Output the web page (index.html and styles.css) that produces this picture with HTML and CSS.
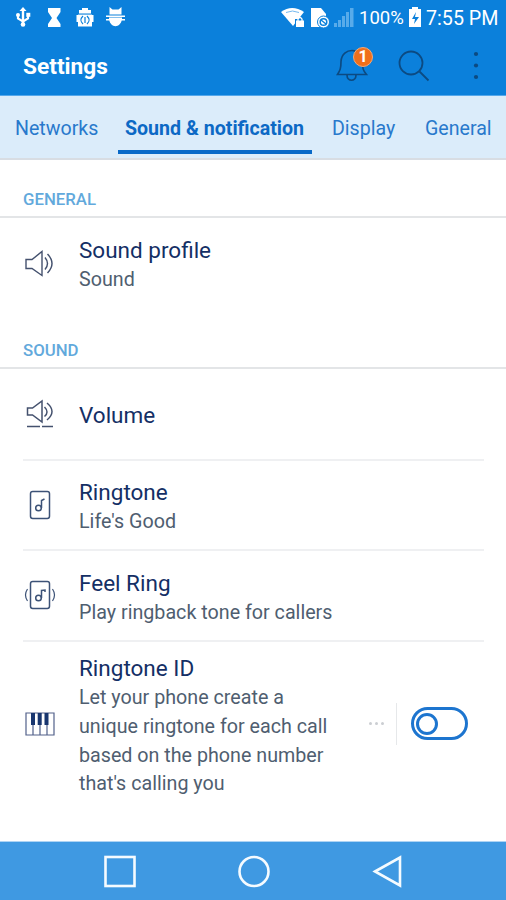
FILE: index.html
```html
<!DOCTYPE html>
<html lang="en">
<head>
<meta charset="utf-8">
<title>Settings</title>
<link rel="stylesheet" href="styles.css">
</head>
<body>
<div class="status">
  <svg class="s-left" width="112" height="24" viewBox="0 0 112 24" fill="#fff">
    <path d="M8 1l3.500 4H4.500zM6.800 4h2.400v14H6.800z"/><circle cx="8" cy="18.500" r="2.300"/><circle cx="3" cy="9" r="2"/><path d="M11.300 6.800h4v4h-4z"/>
    <path d="M3 9v3.500l5 3 5-3V9" fill="none" stroke="#fff" stroke-width="2.200"/>
    <path d="M33 2h12.500v4l-4 6 4 6v3H33v-3l4-6-4-6z"/>
    <path d="M64 4h3V2h6v2h3v4H64zM63 8.500h14v12H63z"/>
    <rect x="61.500" y="9" width="3" height="7"/><rect x="75.500" y="9" width="3" height="7"/>
    <rect x="62" y="7.500" width="16" height=".7" fill="#0b80db"/>
    <path d="M68 10c-3 3-3 5 0 8M72 10c3 3 3 5 0 8M70 11v6" fill="none" stroke="#0b80db" stroke-width="1.200"/>
    <path d="M94.500 1l3 2.500h6l3-2.500v7.500h-12zM91 9.500h19V11H91zM94 11.500h13V13h3v1.500h-3.300c-.7 3-3.200 5.700-6.200 5.700s-5.500-2.700-6.200-5.700H91V13h3z"/>
  </svg>
  <svg class="s-right" width="76" height="24" viewBox="0 0 76 24">
    <path d="M0 6q11-8 23 0L12 20z" fill="#fff"/><path d="M5 6.500q6.500-3 13 0" fill="none" stroke="#75b9ef" stroke-width="1"/>
    <path d="M14 13h10v9H14z" fill="#0b80db"/><path d="M15 14.500h8v6.500h-8z" fill="#fff"/><path d="M17 15v-2q2-3 4 0v2" fill="none" stroke="#fff" stroke-width="1.300"/>
    <path d="M30 2h10l5 6v13H30z" fill="#fff"/><circle cx="42.500" cy="16" r="6" fill="#fff" stroke="#0b80db" stroke-width="1"/><circle cx="42.500" cy="16" r="3.300" fill="none" stroke="#0b80db" stroke-width="1.500"/><path d="M40 14l5 4" stroke="#0b80db" stroke-width="1.500"/>
    <path d="M53 17h3v4h-3zM57 14h3v7h-3zM61 10h3v11h-3zM65 6h3v15h-3zM69 2h3.500v19H69z" fill="#58abea"/>
  </svg>
  <span class="pct">100%</span>
  <svg class="bat" width="14" height="24" viewBox="0 0 14 24"><path d="M4 1h6v2h3v18H1V3h3z" fill="#fff"/><path d="M8 6l-4 7h3l-1 5 5-7H7z" fill="#0b80db"/></svg>
  <span class="time">7:55 PM</span>
</div>
<header class="header">
  <h1><span>Settings</span></h1>
  <div class="bell">
    <svg width="32" height="36" viewBox="0 0 32 36" fill="none" stroke="#0c4a82" stroke-width="1.700"><path d="M1.500 26.500h29c-3.500-4-4-6-4-13C26 5 21 2.500 16 2.500S5.500 6 5 13.500c0 7-1 9-3.500 13zM11 27c0 7 9 7 9 0"/></svg>
    <b class="badge">1</b>
  </div>
  <svg class="search" width="32" height="32" viewBox="0 0 32 32" fill="none" stroke="#0c4a82" stroke-width="1.800"><circle cx="13" cy="13" r="11.500"/><path d="M21.500 21.500l9 9"/></svg>
  <svg class="more" width="6" height="30" viewBox="0 0 6 30" fill="#0c4a82"><circle cx="3" cy="3" r="2.100"/><circle cx="3" cy="14.500" r="2.100"/><circle cx="3" cy="26" r="2.100"/></svg>
</header>
<nav class="tabs">
  <a class="tab t1">Networks</a><a class="tab t2">Sound &amp; notification</a><a class="tab t3">Display</a><a class="tab t4">General</a>
</nav>
<main>
  <h2 class="section first"><span>GENERAL</span></h2>
  <div class="row profile">
    <svg class="ico" width="34" height="34" viewBox="0 0 34 34" fill="none" stroke="#44516e" stroke-width="1.400"><path d="M4 12.500h6l10-8v24l-10-7H4zM23 10.500q5 6 0 12M25.500 7q9 9.500 0 19"/></svg>
    <div class="text"><div class="title">Sound profile</div><div class="sub">Sound</div></div>
  </div>
  <h2 class="section second"><span>SOUND</span></h2>
  <div class="row volume">
    <svg class="ico" width="34" height="34" viewBox="0 0 34 34" fill="none" stroke="#44516e" stroke-width="1.500"><path d="M5.500 11h5L20 4v21l-9.500-7h-5zM22.500 10q5 5 0 9.500M25 6q10 8.500 0 17M5 29.500h13M20 29.500h11"/></svg>
    <div class="text"><div class="title">Volume</div></div>
  </div>
  <div class="row ring">
    <svg class="ico" width="34" height="34" viewBox="0 0 34 34" fill="none" stroke="#3c5277" stroke-width="1.500"><rect x="8.500" y="3.500" width="19" height="27" rx="2.200"/><circle cx="16.500" cy="20" r="2.800"/><path d="M19.500 20v-7.500l3-1.500"/></svg>
    <div class="text"><div class="title">Ringtone</div><div class="sub">Life's Good</div></div>
  </div>
  <div class="row feel">
    <svg class="ico" width="34" height="34" viewBox="0 0 34 34" fill="none" stroke="#3c5277" stroke-width="1.500"><rect x="8.500" y="3.500" width="19" height="27" rx="2.200"/><circle cx="16.500" cy="20" r="2.800"/><path d="M19.500 20v-7.500l3.500-.5v2"/><path d="M5.500 11q-4 6 0 12M30.500 11q4 6 0 12" stroke-width="1.200"/></svg>
    <div class="text"><div class="title">Feel Ring</div><div class="sub">Play ringback tone for callers</div></div>
  </div>
  <div class="row id">
    <svg class="ico" width="34" height="34" viewBox="0 0 34 34"><path d="M4 6h28v22H4zM11 16v12M18 16v12M25 16v12" fill="none" stroke="#52618a" stroke-width="1.200"/><path d="M9 6h4v12H9zM15.700 6h4v12h-4zM22.500 6h4v12h-4z" fill="#19366f"/></svg>
    <div class="text"><div class="title">Ringtone ID</div><div class="sub">Let your phone create a<br>unique ringtone for each call<br>based on the phone number<br>that's calling you</div></div>
    <div class="control">
      <div class="dots"><i></i><i></i><i></i></div><i class="bar"></i><div class="toggle"><i></i></div>
    </div>
  </div>
</main>
<footer class="nav">
  <svg width="32" height="34" viewBox="0 0 32 34"><rect x="1.500" y="2" width="29" height="29"/></svg>
  <svg width="32" height="34" viewBox="0 0 32 34"><circle cx="16" cy="16.500" r="14.500"/></svg>
  <svg width="32" height="34" viewBox="0 0 32 34"><path d="M3 16.500L28 2.500v28z"/></svg>
</footer>
</body>
</html>
```
FILE: styles.css
```css
* { box-sizing: border-box; }
body {
  margin: 0; width: 506px; height: 900px; overflow: hidden;
  display: flex; flex-direction: column;
  background: #fff; font-family: Roboto, "Liberation Sans", sans-serif;
}
svg { display: block; flex: none; }
h1, h2 { margin: 0; }
.status {
  height: 36px; flex: none; display: flex; align-items: center;
  padding-left: 15px; background: #0b80db; color: #fff; white-space: nowrap;
}
.s-left { margin-top: -1px; }
.s-right { margin: 0 0 0 154px; }
.pct { margin-left: 2px; width: 45px; font-size: 18.500px; }
.bat { margin: 0 4px 0 4px; }
.time { font-size: 19.700px; padding-top: 1px; }
.header {
  height: 60px; flex: none; display: flex; align-items: center;
  padding: 0 27px 0 23px; background: #0b80db; border-bottom: 1px solid #55a8eb;
}
h1 { flex: 1; padding-top: 2px; font-size: 22.700px; font-weight: 700; color: #fff; }
.bell { position: relative; margin-right: 30px; }
.badge {
  position: absolute; left: 17px; top: -1px; width: 20px; height: 20px;
  border-radius: 50%; border: 1px solid #f3a978; background: #f06f1b;
  color: #fff; font-size: 16px; line-height: 18px; text-align: center;
}
.search { margin-right: 43px; }
.tabs {
  height: 64px; flex: none; display: flex; padding-left: 15px;
  background: #dbecfa; border-bottom: 2px solid #d8dde3;
}
.tab {
  height: 58px; padding-top: 21px; white-space: nowrap;
  font-size: 19.600px; line-height: 24px; color: #2879cc;
}
.t1 { width: 103px; }
.t2 { width: 194px; padding-left: 7px; font-weight: 700; color: #0c69c5; border-bottom: 4px solid #0869c8; }
.t3 { margin-left: 20px; width: 93px; }
.section {
  height: 58px; padding: 29px 0 0 23px; border-bottom: 2px solid #e3e5e7;
  font-size: 16.800px; line-height: 20px; font-weight: 500; color: #62a9dc;
}
.section.second { height: 53px; padding-top: 24px; }
.row { display: flex; align-items: center; margin: 0 22px 0 22px; }
.ico { margin-right: 23px; }
.text { flex: 1; white-space: nowrap; }
.title { font-size: 22.500px; line-height: 29px; color: #142f65; }
.sub { padding-top: 1px; font-size: 19.700px; line-height: 28.700px; color: #4f5e70; }
.profile { height: 98px; padding-bottom: 4px; }
.profile .ico { margin-top: -3px; }
.volume, .ring, .feel { background: linear-gradient(#eff0f2, #eff0f2) 1px 100% / 100% 2px no-repeat; }
.volume { height: 92px; }
.volume .ico { margin-top: -3px; }
.ring { height: 90px; padding-top: 2px; }
.ring .ico { margin-top: -5px; }
.feel { height: 91px; padding-top: 3px; }
.feel .ico { margin-top: -6px; }
.id { height: 165px; padding-top: 4px; }
.id .ico { margin-top: -6px; }
.control { display: flex; align-items: center; margin: -6px 16px 0 0; }
.dots { display: flex; gap: 3px; }
.dots i { width: 3px; height: 3px; border-radius: 50%; background: #cbced2; }
.bar { width: 1px; height: 42px; margin: 0 14px 0 12px; background: #e6e8ea; }
.toggle {
  width: 57px; height: 33px; padding: 3px 2px; border: 3px solid #1d75cf; border-radius: 17px;
}
.toggle i { display: block; width: 22px; height: 22px; border: 3px solid #1d75cf; border-radius: 50%; }
.nav {
  margin-top: auto; height: 59px; flex: none; display: flex; gap: 102px; align-items: center;
  padding: 1px 0 0 104px; background: #3f99e2; border-top: 1px solid #aed4f4;
}
.nav svg { fill: none; stroke: #f5fbff; stroke-width: 2.600; }
```
